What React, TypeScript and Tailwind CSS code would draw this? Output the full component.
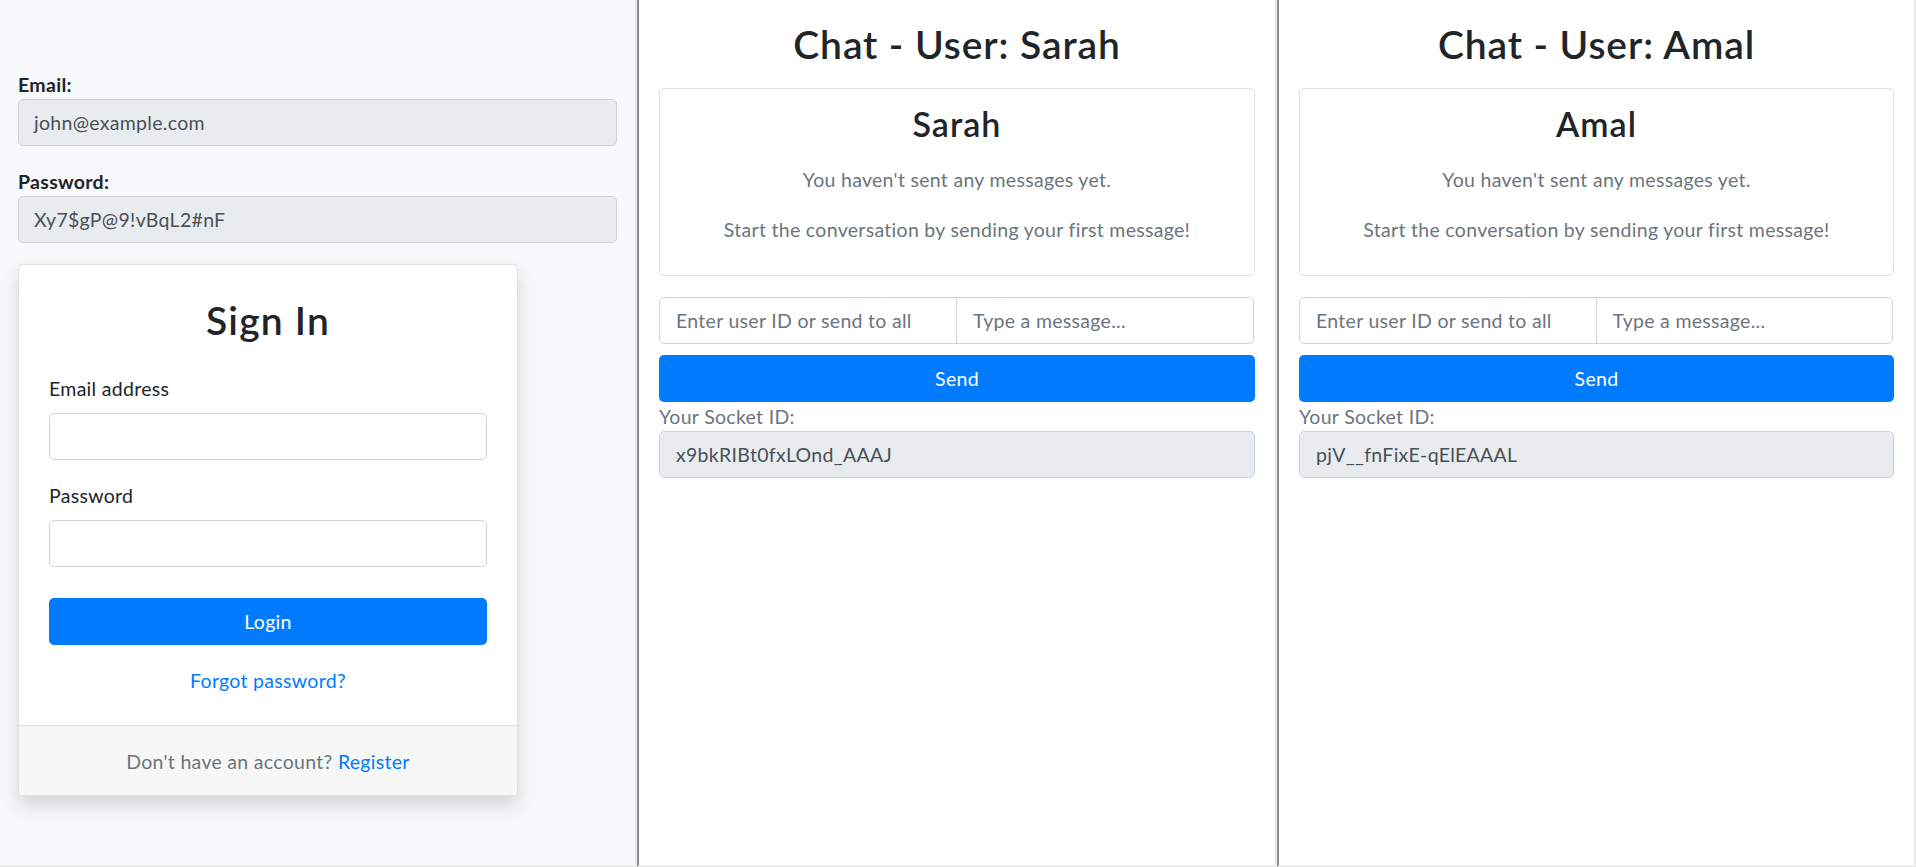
import React from "react";

const FONT = "font-['Lato','Segoe_UI',Roboto,sans-serif]";

function ChatPanel({ user, socketId, last }: { user: string; socketId: string; last?: boolean }) {
  return (
    <div
      className={`${last ? "w-[639px]" : "w-[640px]"} shrink-0 bg-white border-l-2 border-l-[#8c8c8c] border-r-2 border-r-[#ebebeb] border-b-2 border-b-[#ebebeb] px-[20px] pt-[21px]`}
    >
      <h2 className="text-[39px] leading-[47px] tracking-[0.9px] font-semibold text-center text-[#212529] mb-[20px]">
        Chat - User: {user}
      </h2>

      {/* conversation card */}
      <div className="border border-[#dfdfdf] rounded-[5px] pt-[14px] pb-[31px] px-[24px] text-center">
        <h3 className="text-[34px] leading-[41px] tracking-[1px] font-semibold text-[#212529] mb-[21px]">{user}</h3>
        <p className="text-[#6c757d] leading-[29px] mb-[21px]">You haven't sent any messages yet.</p>
        <p className="text-[#6c757d] leading-[29px]">Start the conversation by sending your first message!</p>
      </div>

      <div className="flex mt-[21px]">
        <input
          placeholder="Enter user ID or send to all"
          className="w-1/2 h-[47px] px-[16px] border border-[#ced4da] rounded-l-[5px] outline-none placeholder:text-[#6c757d] text-[#495057]"
        />
        <input
          placeholder="Type a message..."
          className="w-1/2 h-[47px] px-[16px] border border-[#ced4da] -ml-px rounded-r-[5px] outline-none placeholder:text-[#6c757d] text-[#495057]"
        />
      </div>
      <button className="mt-[11px] w-full h-[47px] rounded-[5px] bg-[#007bff] text-white">Send</button>
      <div className="text-[#6c757d] leading-[29px]">Your Socket ID:</div>
      <div className="h-[47px] flex items-center px-[16px] bg-[#e9ecef] border border-[#ced4da] rounded-[5px] text-[#495057]">
        {socketId}
      </div>
    </div>
  );
}

export default function App() {
  return (
    <div className={`${FONT} flex h-[867px] w-[1916px] overflow-hidden text-[19.5px] tracking-[0.3px] text-[#212529]`}>
      {/* Login frame */}
      <div className="w-[637px] shrink-0 bg-[#f8f9fa] border-r-2 border-b-2 border-[#ebebeb] px-[18px] pt-[70px]">
        <div className="font-bold leading-[29px]">Email:</div>
        <div className="h-[47px] flex items-center px-[15px] bg-[#e9ecef] border border-[#ced4da] rounded-[5px] text-[#495057]">
          john@example.com
        </div>
        <div className="font-bold leading-[29px] mt-[21px]">Password:</div>
        <div className="h-[47px] flex items-center px-[15px] bg-[#e9ecef] border border-[#ced4da] rounded-[5px] text-[#495057]">
          Xy7$gP@9!vBqL2#nF
        </div>

        {/* Sign in card */}
        <div className="mt-[21px] w-[500px] bg-white border border-[#e0e0e0] rounded-[5px] shadow-[0_10px_20px_rgba(0,0,0,0.15)] overflow-hidden">
          <div className="px-[30px] pt-[32px] pb-[30px]">
            <h2 className="text-[39px] leading-[47px] tracking-[1.2px] font-semibold text-center mb-[30px]">Sign In</h2>
            <label className="block leading-[29px] mb-[10px]">Email address</label>
            <input className="block w-full h-[47px] px-[15px] border border-[#ced4da] rounded-[5px] bg-white outline-none" />
            <label className="block leading-[29px] mt-[21px] mb-[10px]">Password</label>
            <input type="password" className="block w-full h-[47px] px-[15px] border border-[#ced4da] rounded-[5px] bg-white outline-none" />
            <button className="mt-[31px] w-full h-[47px] rounded-[5px] bg-[#007bff] text-white">Login</button>
            <div className="mt-[21px] text-center leading-[29px]">
              <a className="text-[#007bff]">Forgot password?</a>
            </div>
          </div>
          <div className="bg-[#f7f7f7] border-t border-[#dcdcdc] pt-[21px] pb-[19px] text-center leading-[29px] text-[#6c757d]">
            Don't have an account? <a className="text-[#007bff]">Register</a>
          </div>
        </div>
      </div>

      <ChatPanel user="Sarah" socketId="x9bkRIBt0fxLOnd_AAAJ" />
      <ChatPanel user="Amal" socketId="pjV__fnFixE-qElEAAAL" last />
    </div>
  );
}
